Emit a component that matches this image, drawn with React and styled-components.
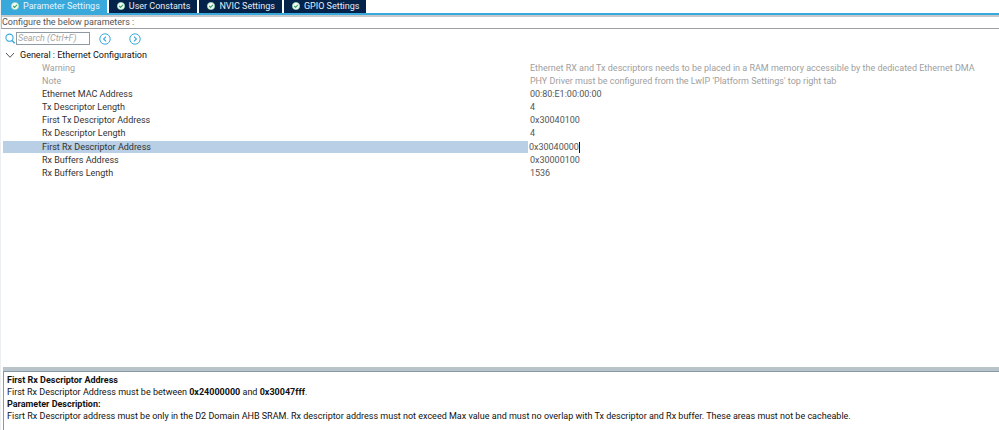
import React, { useState } from "react";
import styled, { createGlobalStyle } from "styled-components";

const GlobalStyle = createGlobalStyle`
  * { box-sizing: border-box; }
  body { margin: 0; background: #fff; }
  button, input { font: inherit; }
`;

const Page = styled.div`
  min-height: 100vh;
  display: flex;
  flex-direction: column;
  border-left: 1px solid #eceff1;
  overflow: hidden;
  font: 9px/13px Roboto, "Noto Sans", sans-serif;
  color: #222;
`;

const TabBar = styled.div`
  display: flex;
  gap: 2px;
  border-bottom: 2px solid #39a9dc;
`;

const Tab = styled.button`
  display: flex;
  align-items: center;
  gap: 4px;
  height: 13px;
  padding: 0 7px 1px 8px;
  border: 0;
  line-height: 12px;
  white-space: nowrap;
  color: ${({ $active }) => ($active ? "#e6f5fc" : "#e8ebf2")};
  background: ${({ $active }) => ($active ? "#39a9dc" : "#03234b")};
  &:first-child { padding-left: 10px; }
`;

const TabIcon = styled.svg`
  width: 8px;
  height: 8px;
  flex: none;
`;

const Caption = styled.div`
  height: 14px;
  border-top: 2px solid #c6cacc;
  border-bottom: 1px solid #9b9fa5;
  border-left: 1px solid #b9bcbe;
  line-height: 11px;
  color: #555;
`;

const SearchRow = styled.div`
  display: flex;
  align-items: center;
  height: 19px;
  padding-left: 4px;
`;

const SearchLabel = styled.label`
  display: flex;
  align-items: center;
  gap: 1px;
  margin-right: 9px;
`;

const SearchInput = styled.input`
  width: 74px;
  height: 13px;
  padding: 0 1px;
  border: 1px solid #8f9aa3;
  outline: 0;
  font-style: italic;
  &::placeholder { color: #a5a5a5; opacity: 1; }
`;

const NavButton = styled.button`
  display: flex;
  width: 12px;
  height: 12px;
  margin-right: 18px;
  padding: 0;
  border: 0;
  background: none;
`;

const GroupHeader = styled.button`
  display: flex;
  align-items: center;
  gap: 5px;
  height: 14px;
  padding: 0 4px;
  border: 0;
  background: none;
  color: #111;
`;

const ParameterArea = styled.div`
  flex: 1;
  padding-left: 2px;
`;

const Parameters = styled.table`
  width: 100%;
  table-layout: fixed;
  border-collapse: separate;
  border-spacing: 0;
`;

const Row = styled.tr`
  height: ${({ $selected }) => ($selected ? 14 : 13)}px;
`;

const Name = styled.th`
  width: 52.7%;
  padding: 0 0 0 39px;
  border: 0 solid transparent;
  border-width: ${({ $selected }) => ($selected ? "1px 0" : 0)};
  line-height: ${({ $selected }) => ($selected ? 12 : 13)}px;
  font-weight: 400;
  text-align: left;
  color: ${({ $muted }) => ($muted ? "#a0a0a0" : "#333")};
  background: ${({ $selected }) => ($selected ? "#b8cfe5" : "none")};
  background-clip: padding-box;
`;

const Value = styled.td`
  padding: 0 0 0 ${({ $selected }) => ($selected ? 0 : 2)}px;
  white-space: nowrap;
  color: ${({ $muted }) => ($muted ? "#a0a0a0" : "#555")};
`;

const ValueEditor = styled.div`
  display: flex;
  align-items: center;
  height: 13px;
`;

const ValueInput = styled.input`
  field-sizing: content;
  height: 13px;
  padding: 0 0 0 1px;
  border: 0;
  outline: 0;
  color: #555;
  background: none;
`;

const Caret = styled.span`
  width: 1px;
  height: 11px;
  background: #111;
`;

const Splitter = styled.div`
  height: 4px;
  margin-left: 2px;
  background: #b9c4ca;
`;

const Description = styled.section`
  height: 59px;
  margin-left: 2px;
  padding: 2px 0 0 3px;
  border-top: 1px solid #8798a6;
  border-left: 1px solid #8798a6;
  line-height: 12px;
  color: #111;
`;

const DescriptionTitle = styled.h2`
  margin: 0;
  font-size: 9px;
  font-weight: 700;
`;

const DescriptionText = styled.p`
  margin: 0;
  white-space: nowrap;
`;

const tabs = ["Parameter Settings", "User Constants", "NVIC Settings", "GPIO Settings"];

const parameters = [
  { name: "Warning", value: "Ethernet RX and Tx descriptors needs to be placed in a RAM memory accessible by the dedicated Ethernet DMA", muted: true },
  { name: "Note", value: "PHY Driver must be configured from the LwIP 'Platform Settings' top right tab", muted: true },
  { name: "Ethernet MAC Address", value: "00:80:E1:00:00:00" },
  { name: "Tx Descriptor Length", value: "4" },
  { name: "First Tx Descriptor Address", value: "0x30040100" },
  { name: "Rx Descriptor Length", value: "4" },
  { name: "First Rx Descriptor Address", value: "0x30040000", selected: true },
  { name: "Rx Buffers Address", value: "0x30000100" },
  { name: "Rx Buffers Length", value: "1536" },
];

function CheckIcon() {
  return (
    <TabIcon viewBox="0 0 8 8" aria-hidden="true">
      <circle cx="4" cy="4" r="3.6" fill="#f2fbf5" stroke="#a6dcb9" strokeWidth="0.7" />
      <path d="M2.2 4 3.6 5.3 5.9 2.9" fill="none" stroke="#3aa567" strokeWidth="1.2" />
    </TabIcon>
  );
}

function Arrow({ d }) {
  return (
    <svg width="12" height="12" viewBox="0 0 12 12" fill="none" stroke="#39a9dc" aria-hidden="true">
      <circle cx="6" cy="6" r="5.2" />
      <path d={d} strokeWidth="1.1" />
    </svg>
  );
}

export default function App() {
  const [active, setActive] = useState(0);
  const [query, setQuery] = useState("");
  const [address, setAddress] = useState("0x30040000");

  return (
    <>
      <GlobalStyle />
      <Page>
        <TabBar role="tablist">
          {tabs.map((label, i) => (
            <Tab key={label} role="tab" aria-selected={i === active} $active={i === active} onClick={() => setActive(i)}>
              <CheckIcon />
              {label}
            </Tab>
          ))}
        </TabBar>
        <Caption>Configure the below parameters :</Caption>
        <SearchRow>
          <SearchLabel>
            <svg width="10" height="11" viewBox="0 0 10 11" fill="none" stroke="#39a9dc" aria-hidden="true">
              <circle cx="4.5" cy="4.7" r="3.6" strokeWidth="1.1" />
              <path d="m7 7.4 2.6 2.8" strokeWidth="1.4" />
            </svg>
            <SearchInput aria-label="Search" placeholder="Search (Ctrl+F)" value={query} onChange={(e) => setQuery(e.target.value)} />
          </SearchLabel>
          <NavButton aria-label="Previous match"><Arrow d="M7 3.6 4.6 6 7 8.4" /></NavButton>
          <NavButton aria-label="Next match"><Arrow d="M5 3.6 7.4 6 5 8.4" /></NavButton>
        </SearchRow>
        <GroupHeader aria-expanded="true">
          <svg width="10" height="8" viewBox="0 0 10 8" fill="none" stroke="#555" aria-hidden="true">
            <path d="M1 2 5 6.3 9 2" />
          </svg>
          General : Ethernet Configuration
        </GroupHeader>
        <ParameterArea>
          <Parameters>
            <tbody>
              {parameters.map(({ name, value, muted, selected }) => (
                <Row key={name} $selected={selected}>
                  <Name scope="row" $muted={muted} $selected={selected}>{name}</Name>
                  <Value $muted={muted} $selected={selected}>
                    {selected ? (
                      <ValueEditor>
                        <ValueInput aria-label={name} value={address} onChange={(e) => setAddress(e.target.value)} />
                        <Caret />
                      </ValueEditor>
                    ) : value}
                  </Value>
                </Row>
              ))}
            </tbody>
          </Parameters>
        </ParameterArea>
        <Splitter />
        <Description>
          <DescriptionTitle>First Rx Descriptor Address</DescriptionTitle>
          <DescriptionText>
            First Rx Descriptor Address must be between <b>0x24000000</b> and <b>0x30047fff</b>.
          </DescriptionText>
          <DescriptionTitle>Parameter Description:</DescriptionTitle>
          <DescriptionText>
            Fisrt Rx Descriptor address must be only in the D2 Domain AHB SRAM. Rx descriptor address must not exceed Max value and must no overlap with Tx descriptor and Rx buffer. These areas must not be cacheable.
          </DescriptionText>
        </Description>
      </Page>
    </>
  );
}
